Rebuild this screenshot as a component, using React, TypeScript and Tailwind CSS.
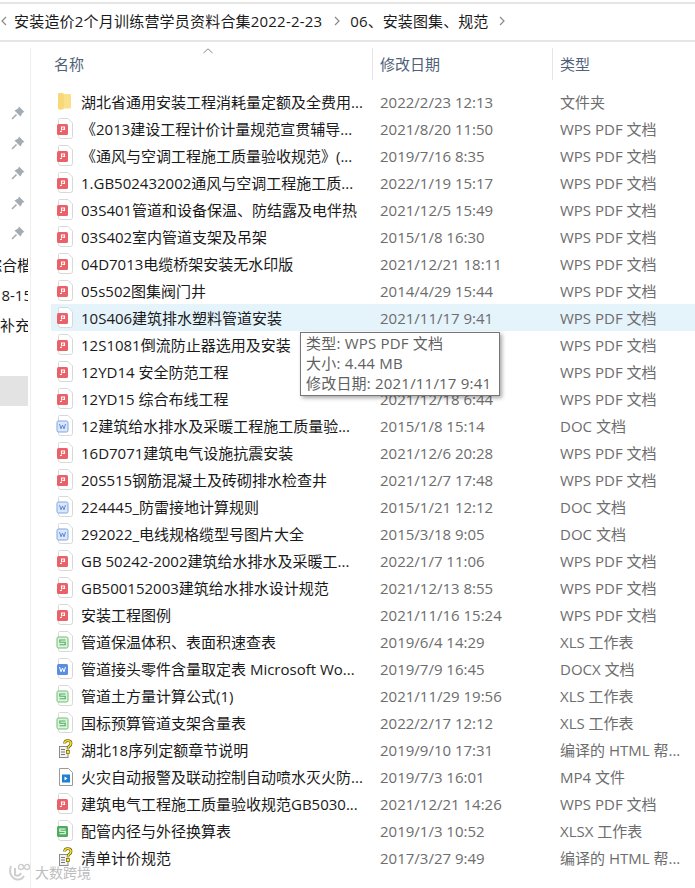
import React from "react";

type Kind = "folder" | "pdf" | "doc" | "docx" | "xls" | "xlsx" | "help" | "mp4";

const rows: [Kind, string, string, string, boolean?][] = [
  ["folder", "湖北省通用安装工程消耗量定额及全费用...", "2022/2/23 12:13", "文件夹"],
  ["pdf", "《2013建设工程计价计量规范宣贯辅导...", "2021/8/20 11:50", "WPS PDF 文档"],
  ["pdf", "《通风与空调工程施工质量验收规范》(...", "2019/7/16 8:35", "WPS PDF 文档"],
  ["pdf", "1.GB502432002通风与空调工程施工质...", "2022/1/19 15:17", "WPS PDF 文档"],
  ["pdf", "03S401管道和设备保温、防结露及电伴热", "2021/12/5 15:49", "WPS PDF 文档"],
  ["pdf", "03S402室内管道支架及吊架", "2015/1/8 16:30", "WPS PDF 文档"],
  ["pdf", "04D7013电缆桥架安装无水印版", "2021/12/21 18:11", "WPS PDF 文档"],
  ["pdf", "05s502图集阀门井", "2014/4/29 15:44", "WPS PDF 文档"],
  ["pdf", "10S406建筑排水塑料管道安装", "2021/11/17 9:41", "WPS PDF 文档", true],
  ["pdf", "12S1081倒流防止器选用及安装", "", "WPS PDF 文档"],
  ["pdf", "12YD14 安全防范工程", "", "WPS PDF 文档"],
  ["pdf", "12YD15 综合布线工程", "2021/12/18 6:44", "WPS PDF 文档"],
  ["doc", "12建筑给水排水及采暖工程施工质量验...", "2015/1/8 15:14", "DOC 文档"],
  ["pdf", "16D7071建筑电气设施抗震安装", "2021/12/6 20:28", "WPS PDF 文档"],
  ["pdf", "20S515钢筋混凝土及砖砌排水检查井", "2021/12/7 17:48", "WPS PDF 文档"],
  ["doc", "224445_防雷接地计算规则", "2015/1/21 12:12", "DOC 文档"],
  ["doc", "292022_电线规格缆型号图片大全", "2015/3/18 9:05", "DOC 文档"],
  ["pdf", "GB 50242-2002建筑给水排水及采暖工...", "2022/1/7 11:06", "WPS PDF 文档"],
  ["pdf", "GB500152003建筑给水排水设计规范", "2021/12/13 8:55", "WPS PDF 文档"],
  ["pdf", "安装工程图例", "2021/11/16 15:24", "WPS PDF 文档"],
  ["xls", "管道保温体积、表面积速查表", "2019/6/4 14:29", "XLS 工作表"],
  ["docx", "管道接头零件含量取定表 Microsoft Wo...", "2019/7/9 16:45", "DOCX 文档"],
  ["xls", "管道土方量计算公式(1)", "2021/11/29 19:56", "XLS 工作表"],
  ["xls", "国标预算管道支架含量表", "2022/2/17 12:12", "XLS 工作表"],
  ["help", "湖北18序列定额章节说明", "2019/9/10 17:31", "编译的 HTML 帮..."],
  ["mp4", "火灾自动报警及联动控制自动喷水灭火防...", "2019/7/3 16:01", "MP4 文件"],
  ["pdf", "建筑电气工程施工质量验收规范GB5030...", "2021/12/21 14:26", "WPS PDF 文档"],
  ["xlsx", "配管内径与外径换算表", "2019/1/3 10:52", "XLSX 工作表"],
  ["help", "清单计价规范", "2017/3/27 9:49", "编译的 HTML 帮..."],
];

function Page() {
  return <path d="M3.5 0.5 H12 L16.5 5 V18.5 Q16.5 20.5 14.5 20.5 H5 Q2.5 20.5 2.5 18.5 V1.5 Q2.5 0.5 3.5 0.5 Z" fill="#fff" stroke="#d8d8d8" />;
}

function Badge({ fill, stroke, glyph }: { fill: string; stroke?: string; glyph: React.ReactNode }) {
  return (
    <>
      <Page />
      <rect x="1" y="6" width="11" height="11" rx="1.5" fill={fill} stroke={stroke ?? "none"} />
      {glyph}
    </>
  );
}

function FileIcon({ kind }: { kind: Kind }) {
  const common = { width: 18, height: 21, viewBox: "0 0 18 21", className: "shrink-0" };
  if (kind === "folder")
    return (
      <svg {...common}>
        <path d="M2 3 Q2 2 3 2 H7 L8 3.5 V18 Q4 19 3 18.5 Q2 18 2 17 Z" fill="#f8d878" />
        <path d="M8 3 H14 Q15 3 15 4 V16.5 Q15 17.5 14 17.5 H5 Q7.5 17 8 15 Z" fill="#fbe08c" />
      </svg>
    );
  if (kind === "pdf")
    return (
      <svg {...common}>
        <Badge
          fill="#e9626a"
          glyph={<path d="M5.5 12.5 V9 H8.5 V11.4 H6.5 M4 13.5 H5.8" fill="none" stroke="#fff" strokeWidth="1.1" />}
        />
      </svg>
    );
  if (kind === "doc")
    return (
      <svg {...common}>
        <Badge
          fill="#dce8fa"
          stroke="#7fa5e3"
          glyph={<path d="M3.5 9 L5 13.8 L6.5 10 L8 13.8 L9.5 9" fill="none" stroke="#5b89d8" strokeWidth="1" />}
        />
      </svg>
    );
  if (kind === "docx")
    return (
      <svg {...common}>
        <Badge
          fill="#5a8ee0"
          glyph={<path d="M3.5 9 L5 13.8 L6.5 10 L8 13.8 L9.5 9" fill="none" stroke="#fff" strokeWidth="1" />}
        />
      </svg>
    );
  if (kind === "xls" || kind === "xlsx") {
    const solid = kind === "xlsx";
    return (
      <svg {...common}>
        <Badge
          fill={solid ? "#4cae5c" : "#dff2e0"}
          stroke={solid ? undefined : "#6cc070"}
          glyph={
            <path
              d="M9.5 9 H3.8 V11.3 H9.2 V13.8 H3.5"
              fill="none"
              stroke={solid ? "#fff" : "#4cae5c"}
              strokeWidth="1.1"
            />
          }
        />
      </svg>
    );
  }
  if (kind === "mp4")
    return (
      <svg {...common}>
        <path d="M3.5 2.5 H12.5 L16.5 6.5 V19.5 H3.5 Z" fill="#fff" stroke="#9a9a9a" />
        <rect x="6" y="8.5" width="8" height="8" fill="#1f7fd0" />
        <path d="M8.5 10.5 L11.5 12.5 L8.5 14.5 Z" fill="#fff" />
      </svg>
    );
  return (
    <svg {...common}>
      <rect x="3.5" y="7.5" width="8.5" height="11" fill="#f3f3f3" stroke="#8a8a8a" />
      <path d="M5 10.5 H9 M5 13 H9 M5 15.5 H9" stroke="#777" strokeWidth="1" />
      <path
        d="M8.6 4.6 Q8.6 1.6 11.7 1.6 Q15 1.6 15 4.4 Q15 6 13.4 7 Q12 7.8 12 9.8"
        fill="none"
        stroke="#6b6200"
        strokeWidth="2.8"
      />
      <path
        d="M8.6 4.6 Q8.6 1.6 11.7 1.6 Q15 1.6 15 4.4 Q15 6 13.4 7 Q12 7.8 12 9.8"
        fill="none"
        stroke="#fbe83a"
        strokeWidth="1.4"
      />
      <rect x="10.4" y="11.6" width="3" height="3" fill="#fbe83a" stroke="#6b6200" strokeWidth="0.7" />
    </svg>
  );
}

function Pin() {
  return (
    <svg width="16" height="16" viewBox="0 0 16 16">
      <path d="M9 1.5 L14.5 7 L12.5 7.8 L10.5 11.5 L4.5 5.5 L8.2 3.5 Z" fill="#a3abb3" />
      <path d="M6.5 9.5 L2 14" stroke="#a3abb3" strokeWidth="1.6" />
    </svg>
  );
}

function Chevron({ dir = "right", color = "#8a8a8a" }: { dir?: "left" | "right"; color?: string }) {
  return (
    <svg width="8" height="10" viewBox="0 0 8 10">
      <path d={dir === "right" ? "M2 1 L6 5 L2 9" : "M6 1 L2 5 L6 9"} fill="none" stroke={color} strokeWidth="1.2" />
    </svg>
  );
}

export default function App() {
  return (
    <div
      className="relative w-[695px] h-[888px] overflow-hidden bg-white text-[15px] text-[#1a1a1a]"
      style={{ fontFamily: '"Open Sans", "Noto Sans CJK SC", sans-serif' }}
    >
      <div className="mt-[2px] h-[40px] border-y-2 border-[#e6e6e6] flex items-center pb-[2px]">
        <div className="w-[14px] flex">
          <Chevron dir="left" />
        </div>
        <span className="whitespace-nowrap tracking-[0.2px]">安装造价2个月训练营学员资料合集2022-2-23</span>
        <div className="ml-[11px] w-[17px] flex">
          <Chevron />
        </div>
        <span className="whitespace-nowrap tracking-[0.1px]">06、安装图集、规范</span>
        <div className="ml-[10px] flex">
          <Chevron />
        </div>
      </div>

      <div className="flex h-[846px]">
        <div className="w-[31px] shrink-0 border-r border-[#eeeeee] mt-[6px] overflow-hidden">
          <div className="w-[28px] overflow-hidden">
            <div className="flex flex-col items-center w-[36px] pt-[57px] gap-[14px]">
              {[0, 1, 2, 3, 4].map((i) => (
                <Pin key={i} />
              ))}
            </div>
            <div className="mt-[13px] flex flex-col gap-[8px] whitespace-nowrap h-[90px]">
              <div className="h-[22px] w-[32px] flex justify-end">综合楷</div>
              <div className="h-[22px] w-[32px] flex justify-end">8-15</div>
              <div className="h-[22px] w-[30px] flex justify-end">补充</div>
            </div>
            <div className="mt-[32px] h-[30px] bg-[#e3e3e3]"></div>
          </div>
        </div>

        <div className="pl-[20px] flex-1 min-w-0">
          <div className="relative h-[46px] flex text-[#4f6279]">
            <svg className="absolute left-[152px] top-[6px]" width="10" height="6" viewBox="0 0 10 6">
              <path d="M0.5 5 L5 0.8 L9.5 5" fill="none" stroke="#8a8a8a" strokeWidth="1" />
            </svg>
            <div className="w-[322px] pt-[5px] h-[32px] mt-[6px] pl-[3px] border-r border-[#e5e5e5]">名称</div>
            <div className="w-[180px] pt-[5px] h-[32px] mt-[6px] pl-[7px] border-r border-[#e5e5e5]">修改日期</div>
            <div className="pt-[5px] h-[32px] mt-[6px] pl-[7px]">类型</div>
          </div>
          {rows.map(([kind, name, date, type, hi], i) => (
            <div key={i} className={`flex items-center h-[27px] whitespace-nowrap ${hi ? "bg-[#e5f3fb]" : ""}`}>
              <div className="w-[30px] pl-[5px] shrink-0 flex">
                <FileIcon kind={kind} />
              </div>
              <div className="w-[299px] shrink-0 pt-[1px]">{name}</div>
              <div className="w-[180px] shrink-0 pt-[1px] text-[#6d6d6d]">{date}</div>
              <div className="pt-[1px] text-[#6d6d6d]">{type}</div>
            </div>
          ))}
        </div>
      </div>

      <div className="absolute left-[300px] top-[332px] w-[200px] h-[64px] bg-white border border-[#767676] pl-[5px] leading-[20px] tracking-[0.2px] text-[#5f5f5f] shadow-[2px_2px_4px_rgba(0,0,0,0.35)] whitespace-nowrap">
        <div>类型: WPS PDF 文档</div>
        <div>大小: 4.44 MB</div>
        <div>修改日期: 2021/11/17 9:41</div>
      </div>

      <div className="absolute left-[7px] top-[862px] flex items-center gap-[2px] text-[14px] text-[#bdbdbd]">
        <svg width="26" height="20" viewBox="0 0 26 20">
          <path d="M4 3 Q1 12 8 16 Q14 18 17 13 M8 5 V12 Q12 14 14 10" fill="none" stroke="#cfcfcf" strokeWidth="2" />
          <circle cx="14" cy="4" r="2.5" fill="none" stroke="#cfcfcf" strokeWidth="1.4" />
          <circle cx="20" cy="4" r="2.5" fill="none" stroke="#cfcfcf" strokeWidth="1.4" />
        </svg>
        <span>大数跨境</span>
      </div>
    </div>
  );
}
